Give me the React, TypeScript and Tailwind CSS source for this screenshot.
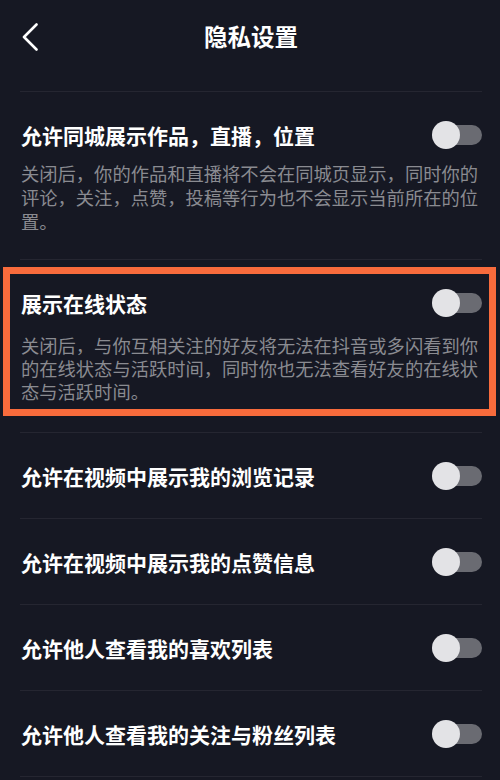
import React from 'react';

const FONT = {fontFamily: '"Noto Sans CJK SC", "Noto Sans", sans-serif'};

function Toggle() {
  return (
    <div className="relative flex items-center w-[50px] h-[28px] shrink-0">
      <div className="ml-[13px] w-[37px] h-[20px] rounded-full bg-[#6a6b72]" />
      <div className="absolute left-0 top-0 w-[28px] h-[28px] rounded-full bg-[#e3e3e6]" />
    </div>
  );
}

function Divider() {
  return <div className="ml-[20px] mr-[18px] h-px bg-[#252631]" />;
}

const simpleRows = [
  '允许在视频中展示我的浏览记录',
  '允许在视频中展示我的点赞信息',
  '允许他人查看我的喜欢列表',
  '允许他人查看我的关注与粉丝列表',
];

export default function App() {
  return (
    <div className="w-[500px] h-[780px] overflow-hidden bg-[#161823] text-white" style={FONT}>
      {/* Header */}
      <div className="grid grid-cols-[1fr_auto_1fr] items-center h-[74px] px-[20px]">
        <svg width="18" height="28" viewBox="0 0 18 28" fill="none" className="ml-[1px]">
          <polyline
            points="15.5,1.5 3,14 15.5,26.5"
            stroke="#ffffff"
            strokeWidth="2.6"
            strokeLinecap="round"
            strokeLinejoin="round"
          />
        </svg>
        <h1 className="text-[23.5px] font-bold leading-none ml-[2px]">隐私设置</h1>
        <div />
      </div>
      <div className="h-[17px]" />
      <Divider />

      {/* Row 1 */}
      <div className="pl-[21px] pr-[18px] pt-[29px] pb-[26px]">
        <div className="flex items-center justify-between h-[28px]">
          <span className="text-[21px] font-semibold leading-[28px]">允许同城展示作品，直播，位置</span>
          <Toggle />
        </div>
        <p className="mt-[12px] w-[462px] text-[18.3px] leading-[24px] text-[#8a8b91]">
          关闭后，你的作品和直播将不会在同城页显示，同时你的评论，关注，点赞，投稿等行为也不会显示当前所在的位置。
        </p>
      </div>
      <Divider />

      {/* Row 2 (highlighted) */}
      <div className="mt-[7px] ml-[3px] mr-[4px] border-[7px] border-[#f86b3c] pl-[11px] pr-[7px] pt-[15px] pb-[6px]">
        <div className="flex items-center justify-between h-[28px]">
          <span className="text-[21px] font-semibold leading-[28px]">展示在线状态</span>
          <Toggle />
        </div>
        <p className="mt-[17px] w-[462px] text-[18.3px] leading-[23px] text-[#8a8b91]">
          关闭后，与你互相关注的好友将无法在抖音或多闪看到你的在线状态与活跃时间，同时你也无法查看好友的在线状态与活跃时间。
        </p>
      </div>
      <div className="h-[16px]" />
      <Divider />

      {/* Simple rows */}
      {simpleRows.map((label) => (
        <div key={label}>
          <div className="flex items-center justify-between h-[85px] pl-[21px] pr-[18px]">
            <span className="text-[21px] font-semibold leading-[28px]">{label}</span>
            <Toggle />
          </div>
          <Divider />
        </div>
      ))}
    </div>
  );
}
